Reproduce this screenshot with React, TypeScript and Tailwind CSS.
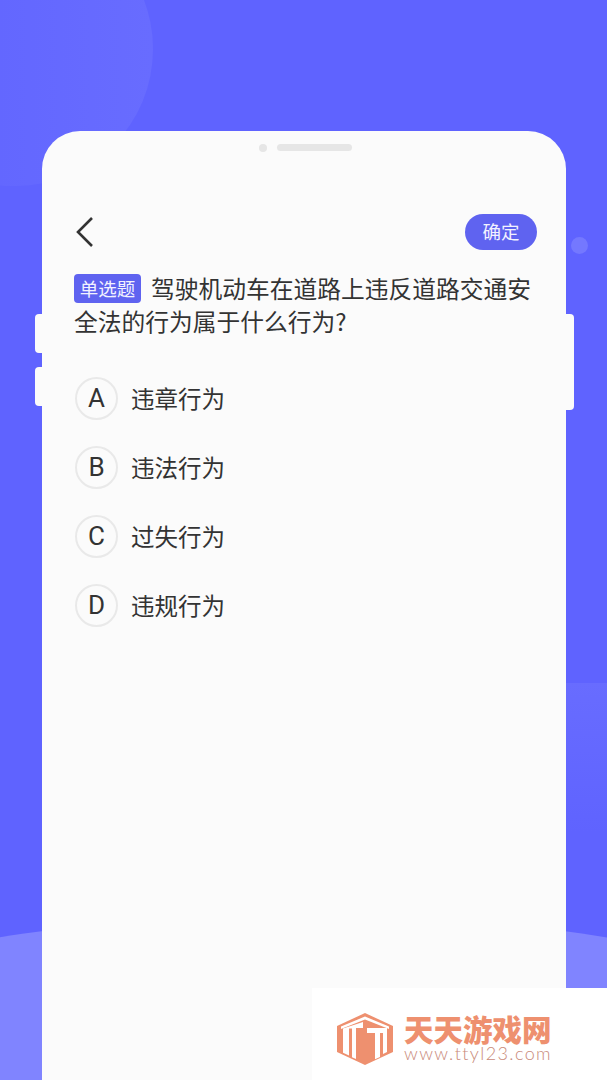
const cjk = "font-['Noto_Sans_CJK_SC','Noto_Sans',sans-serif]";

const options = [
  { key: 'A', label: '违章行为' },
  { key: 'B', label: '违法行为' },
  { key: 'C', label: '过失行为' },
  { key: 'D', label: '违规行为' },
];

function OptionRow({ optionKey, label }: { optionKey: string; label: string }) {
  return (
    <div className="flex h-[69px] items-center gap-[14px]">
      <span className="ml-[1px] flex h-[43px] w-[43px] items-center justify-center rounded-full border-2 border-[#e9e9e9] font-['Roboto',sans-serif] text-[26px] font-normal text-[#333333]">
        {optionKey}
      </span>
      <span className="ml-[-1px] text-[23.5px] leading-none text-[#333333]">{label}</span>
    </div>
  );
}

function WatermarkLogo() {
  return (
    <svg width="58" height="52" viewBox="0 0 58 52" fill="none" aria-hidden="true">
      <path d="M29 0 57 13v26L29 52 1 39V13Z" fill="#ee906f" />
      <path d="M5 13.500 29 3.500l24 10v2.500L29 6.500 5 16Z" fill="#fff" />
      <path d="M7 15.500 27 9v6H20v31l-4-1.800V15.500h-3v27l-6-2.800Z" fill="#fff" />
      <path d="M31 15h20v24l-4 2V20h-3v24l-5 2.300V20h-8Z" fill="#fff" />
    </svg>
  );
}

export default function App() {
  return (
    <div className={`relative h-[1080px] w-[607px] overflow-hidden bg-[#5f63ff] ${cjk}`}>
      {/* background decoration */}
      <div className="absolute left-[-125px] top-[-88px] h-[274px] w-[278px] rounded-full bg-gradient-to-r from-[#5f63ff] to-[#686cff]" />
      <div className="absolute left-[480px] top-[683px] h-[150px] w-[220px] rounded-[20px] bg-gradient-to-b from-[#686cff] to-[#5f63ff]" />
      <div className="absolute left-[-1597px] top-[913px] h-[3800px] w-[3800px] rounded-full bg-[#8084ff]" />
      <div className="absolute left-[571px] top-[237px] h-[17px] w-[17px] rounded-full bg-[#7478ff]" />

      {/* side tabs of the phone */}
      <div className="absolute left-[35px] top-[314px] h-[39px] w-[12px] rounded-l-[4px] bg-[#fbfbfb]" />
      <div className="absolute left-[35px] top-[367px] h-[39px] w-[12px] rounded-l-[4px] bg-[#fbfbfb]" />
      <div className="absolute left-[562px] top-[314px] h-[96px] w-[12px] rounded-r-[4px] bg-[#fbfbfb]" />

      <div className="relative ml-[42px] mt-[131px] h-[949px] w-[524px] rounded-t-[38px] bg-[#fbfbfb] px-[32px]">
        <div className="flex justify-center gap-[10px] pl-[2px] pt-[13px]">
          <span className="h-[8px] w-[8px] rounded-full bg-[#e6e6e6]" />
          <span className="h-[7px] w-[75px] rounded-full bg-[#e6e6e6]" />
        </div>

        <div className="mt-[62px] flex items-center justify-between">
          <svg width="20" height="32" viewBox="0 0 20 32" fill="none" className="ml-[1px]" aria-hidden="true">
            <path d="M17 2 3 16l14 14" stroke="#333333" strokeWidth="2.6" />
          </svg>
          <button type="button" className="mr-[-3px] h-[36px] w-[72px] rounded-full bg-[#5f63f0] text-[18.500px] text-[#f2f2ff]">
            确定
          </button>
        </div>

        <p className="mt-[21px] text-[23.75px] leading-[33px] text-[#333333]">
          <span className="mr-[10px] inline-block h-[29px] w-[67px] rounded-[4px] bg-[#5f63f0] text-center align-[2px] text-[18.500px] leading-[29px] text-[#f2f2ff]">
            单选题
          </span>
          驾驶机动车在道路上违反道路交通安全法的行为属于什么行为?
        </p>

        <div className="mt-[27px] flex flex-col">
          {options.map((o) => (
            <OptionRow key={o.key} optionKey={o.key} label={o.label} />
          ))}
        </div>
      </div>

      {/* site watermark */}
      <div className="absolute bottom-0 right-0 flex h-[92px] w-[295px] items-start gap-[10px] bg-white pl-[24px] pt-[25px]">
        <WatermarkLogo />
        <div className="flex flex-col">
          <span className="text-[29.5px] font-black leading-[31px] text-[#ee906f]">天天游戏网</span>
          <span className="font-['Lato',sans-serif] text-[18px] font-light leading-[18px] tracking-[1.4px] text-[#c98a7a]">www.ttyl23.com</span>
        </div>
      </div>
    </div>
  );
}
